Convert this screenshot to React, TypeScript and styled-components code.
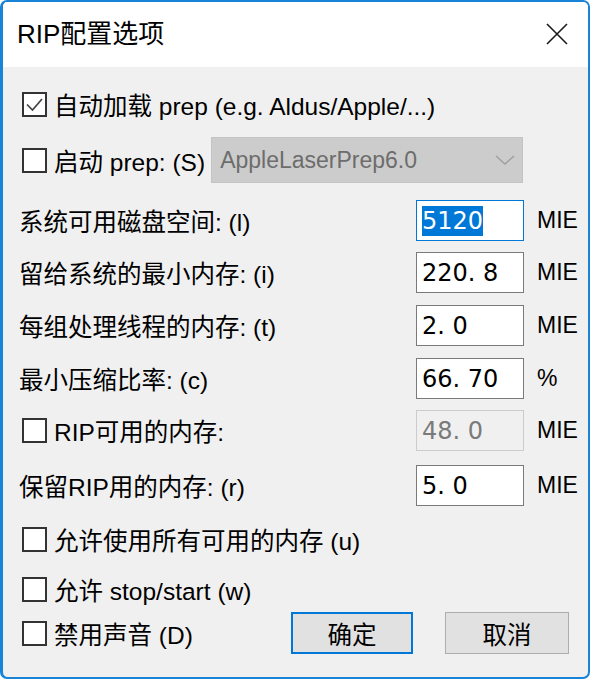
import React from "react";
import styled, { createGlobalStyle } from "styled-components";

const GlobalStyle = createGlobalStyle`
  html, body { margin: 0; padding: 0; background: #ffffff; }
  body { font-family: "Liberation Sans", "Noto Sans CJK SC", sans-serif; }
  * { box-sizing: border-box; }
`;

const Window = styled.div`
  width: 590px;
  height: 679px;
  border: 2px solid #1883d7;
  border-left-width: 3px;
  border-radius: 7px;
  overflow: hidden;
  display: flex;
  flex-direction: column;
  background: #f0f0f0;
`;

const TitleBar = styled.div`
  height: 65px;
  flex: none;
  background: #ffffff;
  display: flex;
  align-items: center;
  justify-content: space-between;
  padding: 0 19px 2px 14px;
`;

const Title = styled.div`
  font-size: 26px;
  color: #000;
  line-height: 1;
`;

const Body = styled.div`
  flex: 1;
  display: flex;
  flex-direction: column;
  padding: 24px 13px 0 16px;
  font-size: 24.5px;
  color: #000;
`;

const Row = styled.div<{ $h: number; $mt: number }>`
  display: flex;
  align-items: center;
  height: ${(p) => p.$h}px;
  margin-top: ${(p) => p.$mt}px;
  white-space: nowrap;
`;

const FieldRow = styled.div<{ $mt: number }>`
  display: grid;
  grid-template-columns: 1fr 108px 51px;
  align-items: center;
  height: 41px;
  margin-top: ${(p) => p.$mt}px;
  white-space: nowrap;
`;

const Box = styled.span`
  width: 25px;
  height: 25px;
  flex: none;
  border: 2px solid #333333;
  background: #ffffff;
  margin: 0 7px 0 3px;
  display: flex;
  align-items: center;
  justify-content: center;
`;

const FieldLabel = styled.div`
  display: flex;
  align-items: center;
`;

const Input = styled.div<{ $state?: "focus" | "disabled" }>`
  height: 41px;
  width: 108px;
  border: 1px solid
    ${(p) =>
      p.$state === "focus" ? "#0078d7" : p.$state === "disabled" ? "#cccccc" : "#7a7a7a"};
  background: ${(p) => (p.$state === "disabled" ? "#f0f0f0" : "#ffffff")};
  color: ${(p) => (p.$state === "disabled" ? "#7a7a7a" : "#000000")};
  font-family: "DejaVu Sans", sans-serif;
  font-size: 24px;
  display: flex;
  align-items: center;
  padding-left: 5px;
  white-space: pre;
`;

const Selected = styled.span`
  background: #0078d7;
  color: #ffffff;
  line-height: 30px;
`;

const Unit = styled.div`
  padding-left: 13px;
  font-size: 23px;
`;

const Combo = styled.div`
  margin-left: 6px;
  width: 312px;
  height: 46px;
  background: #cccccc;
  border: 1px solid #c4c4c4;
  display: flex;
  align-items: center;
  justify-content: space-between;
  padding: 0 6px 0 8px;
  color: #6d6d6d;
  font-size: 23px;
`;

const Buttons = styled.div`
  margin-left: auto;
  margin-right: 6px;
  display: flex;
  gap: 32px;
`;

const Button = styled.div<{ $primary?: boolean }>`
  height: 42px;
  width: ${(p) => (p.$primary ? 122 : 124)}px;
  background: #e1e1e1;
  border: ${(p) => (p.$primary ? "2px solid #0078d7" : "1px solid #adadad")};
  display: flex;
  align-items: center;
  justify-content: center;
  font-size: 24.5px;
  color: #000;
`;

const CloseIcon = () => (
  <svg width="24" height="24" viewBox="0 0 24 24">
    <path d="M2 2 L22 22 M22 2 L2 22" stroke="#1a1a1a" strokeWidth="1.6" fill="none" />
  </svg>
);

const Check = () => (
  <svg width="21" height="21" viewBox="0 0 21 21">
    <path d="M3 10.5 L8.5 16 L18 5" stroke="#444" strokeWidth="1.7" fill="none" />
  </svg>
);

const Chevron = () => (
  <svg width="22" height="12" viewBox="0 0 22 12">
    <path d="M2 2 L11 10 L20 2" stroke="#a0a0a0" strokeWidth="1.5" fill="none" />
  </svg>
);

export default function App() {
  return (
    <>
      <GlobalStyle />
      <Window>
        <TitleBar>
          <Title>RIP配置选项</Title>
          <CloseIcon />
        </TitleBar>
        <Body>
          <Row $h={26} $mt={0}>
            <Box>
              <Check />
            </Box>
            自动加载 prep (e.g. Aldus/Apple/...)
          </Row>
          <Row $h={46} $mt={20}>
            <Box />
            启动 prep: (S)
            <Combo>
              AppleLaserPrep6.0
              <Chevron />
            </Combo>
          </Row>
          <FieldRow $mt={17}>
            <FieldLabel>系统可用磁盘空间: (l)</FieldLabel>
            <Input $state="focus">
              <Selected>5120</Selected>
            </Input>
            <Unit>MIE</Unit>
          </FieldRow>
          <FieldRow $mt={11}>
            <FieldLabel>留给系统的最小内存: (i)</FieldLabel>
            <Input>220. 8</Input>
            <Unit>MIE</Unit>
          </FieldRow>
          <FieldRow $mt={12}>
            <FieldLabel>每组处理线程的内存: (t)</FieldLabel>
            <Input>2. 0</Input>
            <Unit>MIE</Unit>
          </FieldRow>
          <FieldRow $mt={12}>
            <FieldLabel>最小压缩比率: (c)</FieldLabel>
            <Input>66. 70</Input>
            <Unit>%</Unit>
          </FieldRow>
          <FieldRow $mt={11}>
            <FieldLabel>
              <Box />
              RIP可用的内存:
            </FieldLabel>
            <Input $state="disabled">48. 0</Input>
            <Unit>MIE</Unit>
          </FieldRow>
          <FieldRow $mt={14}>
            <FieldLabel>保留RIP用的内存: (r)</FieldLabel>
            <Input>5. 0</Input>
            <Unit>MIE</Unit>
          </FieldRow>
          <Row $h={26} $mt={20}>
            <Box />
            允许使用所有可用的内存 (u)
          </Row>
          <Row $h={26} $mt={24}>
            <Box />
            允许 stop/start (w)
          </Row>
          <Row $h={42} $mt={10}>
            <Box />
            禁用声音 (D)
            <Buttons>
              <Button $primary>确定</Button>
              <Button>取消</Button>
            </Buttons>
          </Row>
        </Body>
      </Window>
    </>
  );
}
